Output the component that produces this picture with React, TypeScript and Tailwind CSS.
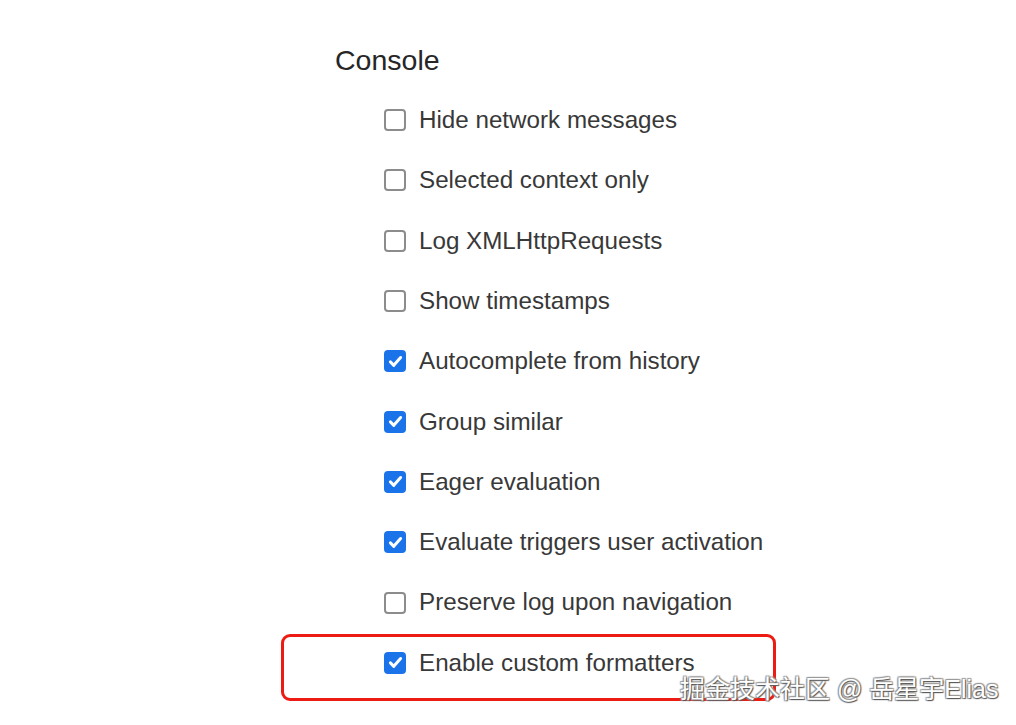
import React from "react";

const items: [string, boolean][] = [
  ["Hide network messages", false],
  ["Selected context only", false],
  ["Log XMLHttpRequests", false],
  ["Show timestamps", false],
  ["Autocomplete from history", true],
  ["Group similar", true],
  ["Eager evaluation", true],
  ["Evaluate triggers user activation", true],
  ["Preserve log upon navigation", false],
  ["Enable custom formatters", true],
];

function Box({ checked }: { checked: boolean }) {
  if (checked) {
    return (
      <span className="flex h-[22px] w-[22px] shrink-0 items-center justify-center rounded-[4px] bg-[#1a73e8]">
        <svg width="17" height="17" viewBox="0 0 16 16" fill="none">
          <path d="M3.2 8.4 L6.4 11.6 L12.8 4.2" stroke="white" strokeWidth="2.8" strokeLinecap="round" strokeLinejoin="round" />
        </svg>
      </span>
    );
  }
  return <span className="block h-[22px] w-[22px] shrink-0 rounded-[4px] border-2 border-[#8c8c8c] bg-white" />;
}

export default function App() {
  return (
    <div className="relative h-[725px] w-[1016px] overflow-hidden bg-white font-['Liberation_Sans',Arial,sans-serif]">
      <div className="flex flex-col pl-[335px] pt-[30px]">
        <div className="flex h-[60px] items-center text-[28.5px] text-[#262626]">Console</div>
        <div className="flex flex-col pl-[49px]">
          {items.map(([label, checked]) => (
            <div key={label} className="flex h-[60.3px] items-center gap-[13px]">
              <Box checked={checked} />
              <span className="text-[24.2px] leading-none text-[#383838]">{label}</span>
            </div>
          ))}
        </div>
      </div>
      <div className="absolute left-[281px] top-[634px] h-[67px] w-[495px] rounded-[9px] border-[3.5px] border-[#ec1c14]" />
      <div className="absolute left-[680px] top-[677px] text-[25px] leading-none text-white [text-shadow:1px_1px_1px_#555,-1px_-1px_1px_#999,1px_-1px_1px_#999,-1px_1px_1px_#999] font-['Liberation_Sans','Noto_Sans_CJK_SC',sans-serif] whitespace-nowrap">
        掘金技术社区 @ 岳星宇Elias
      </div>
    </div>
  );
}
